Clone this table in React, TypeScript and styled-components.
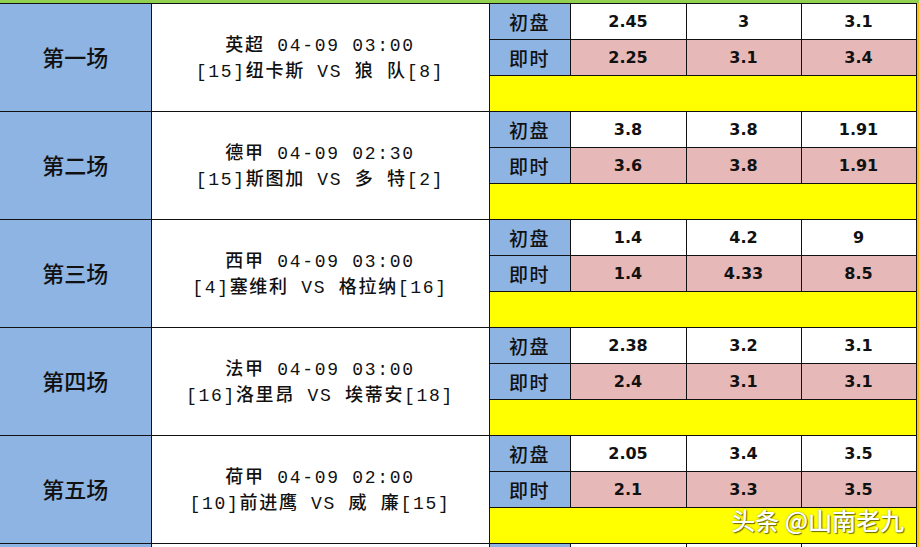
import * as React from "react";
import styled, { createGlobalStyle } from "styled-components";

interface Match {
  title: string;
  info: string;
  teams: string;
  early: string[];
  live: string[];
}

const matches: Match[] = [
  { title: "第一场", info: "英超 04-09 03:00", teams: "[15]纽卡斯 VS 狼 队[8]", early: ["2.45", "3", "3.1"], live: ["2.25", "3.1", "3.4"] },
  { title: "第二场", info: "德甲 04-09 02:30", teams: "[15]斯图加 VS 多 特[2]", early: ["3.8", "3.8", "1.91"], live: ["3.6", "3.8", "1.91"] },
  { title: "第三场", info: "西甲 04-09 03:00", teams: "[4]塞维利 VS 格拉纳[16]", early: ["1.4", "4.2", "9"], live: ["1.4", "4.33", "8.5"] },
  { title: "第四场", info: "法甲 04-09 03:00", teams: "[16]洛里昂 VS 埃蒂安[18]", early: ["2.38", "3.2", "3.1"], live: ["2.4", "3.1", "3.1"] },
  { title: "第五场", info: "荷甲 04-09 02:00", teams: "[10]前进鹰 VS 威 廉[15]", early: ["2.05", "3.4", "3.5"], live: ["2.1", "3.3", "3.5"] },
];

const GlobalStyle = createGlobalStyle`
  html, body {
    margin: 0;
    padding: 0;
    background: #ffffff;
    overflow: hidden;
  }
`;

export default function App() {
  return (
    <Page>
      <GlobalStyle />
      <TopBar />
      <Body>
        <Sheet>
          <colgroup>
            <col style={{ width: 151 }} />
            <col style={{ width: 338 }} />
            <col style={{ width: 81 }} />
            <col style={{ width: 116 }} />
            <col style={{ width: 115 }} />
            <col style={{ width: 115 }} />
          </colgroup>
          <tbody>
            {matches.map((m) => (
              <React.Fragment key={m.title}>
                <tr>
                  <NameCell rowSpan={3}>{m.title}</NameCell>
                  <InfoCell rowSpan={3}>
                    <InfoLine>{m.info}</InfoLine>
                    <InfoLine>{m.teams}</InfoLine>
                  </InfoCell>
                  <LabelCell>初盘</LabelCell>
                  {m.early.map((v, i) => (
                    <OddCell key={i}>{v}</OddCell>
                  ))}
                </tr>
                <tr>
                  <LabelCell>即时</LabelCell>
                  {m.live.map((v, i) => (
                    <OddCell key={i} $live>
                      {v}
                    </OddCell>
                  ))}
                </tr>
                <tr>
                  <NoteCell colSpan={4} />
                </tr>
              </React.Fragment>
            ))}
            {/* next block, only its top edge is in view */}
            <tr>
              <NameCell />
              <InfoCell />
              <LabelCell />
              <OddCell />
              <OddCell />
              <OddCell />
            </tr>
          </tbody>
        </Sheet>
        <SideStrip />
      </Body>
      <Watermark>头条 @山南老九</Watermark>
    </Page>
  );
}

const Page = styled.div`
  position: relative;
  width: 919px;
  height: 547px;
  overflow: hidden;
`;

const TopBar = styled.div`
  height: 3px;
  background: #92d050;
`;

const Body = styled.div`
  display: flex;
  align-items: flex-start;
`;

const Sheet = styled.table`
  border-collapse: collapse;
  table-layout: fixed;
  width: 916px;
  flex-shrink: 0;

  td {
    border: 1px solid #111;
    padding: 0;
    height: 35px;
    text-align: center;
    vertical-align: middle;
    color: #111;
  }
`;

const SideStrip = styled.div`
  width: 3px;
  align-self: stretch;
  background: #ffc000;
`;

const NameCell = styled.td`
  background: #8db4e2;
  font:
    500 22px "Noto Sans CJK SC",
    sans-serif;
  && {
    border-left: none;
    padding-bottom: 4px;
  }
`;

const InfoCell = styled.td`
  background: #ffffff;
  font:
    500 18px "Liberation Mono",
    "Noto Sans CJK SC",
    monospace;
  letter-spacing: 1.7px;
  && {
    padding-top: 3px;
  }
`;

const InfoLine = styled.div`
  line-height: 26px;
  white-space: pre;
`;

const LabelCell = styled.td`
  background: #8db4e2;
  font:
    500 19px "Noto Sans CJK SC",
    sans-serif;
  letter-spacing: 1.5px;
`;

const OddCell = styled.td<{ $live?: boolean }>`
  background: ${(p) => (p.$live ? "#e6b8b7" : "#ffffff")};
  font:
    700 16px "DejaVu Sans",
    Verdana,
    sans-serif;
`;

const NoteCell = styled.td`
  background: #ffff00;
`;

const Watermark = styled.div`
  position: absolute;
  right: 15px;
  top: 502px;
  color: #ffffff;
  font:
    500 24px "Noto Sans CJK SC",
    sans-serif;
  text-shadow:
    1px 1px 1px rgba(0, 0, 0, 0.55),
    0 0 2px rgba(0, 0, 0, 0.35);
`;
